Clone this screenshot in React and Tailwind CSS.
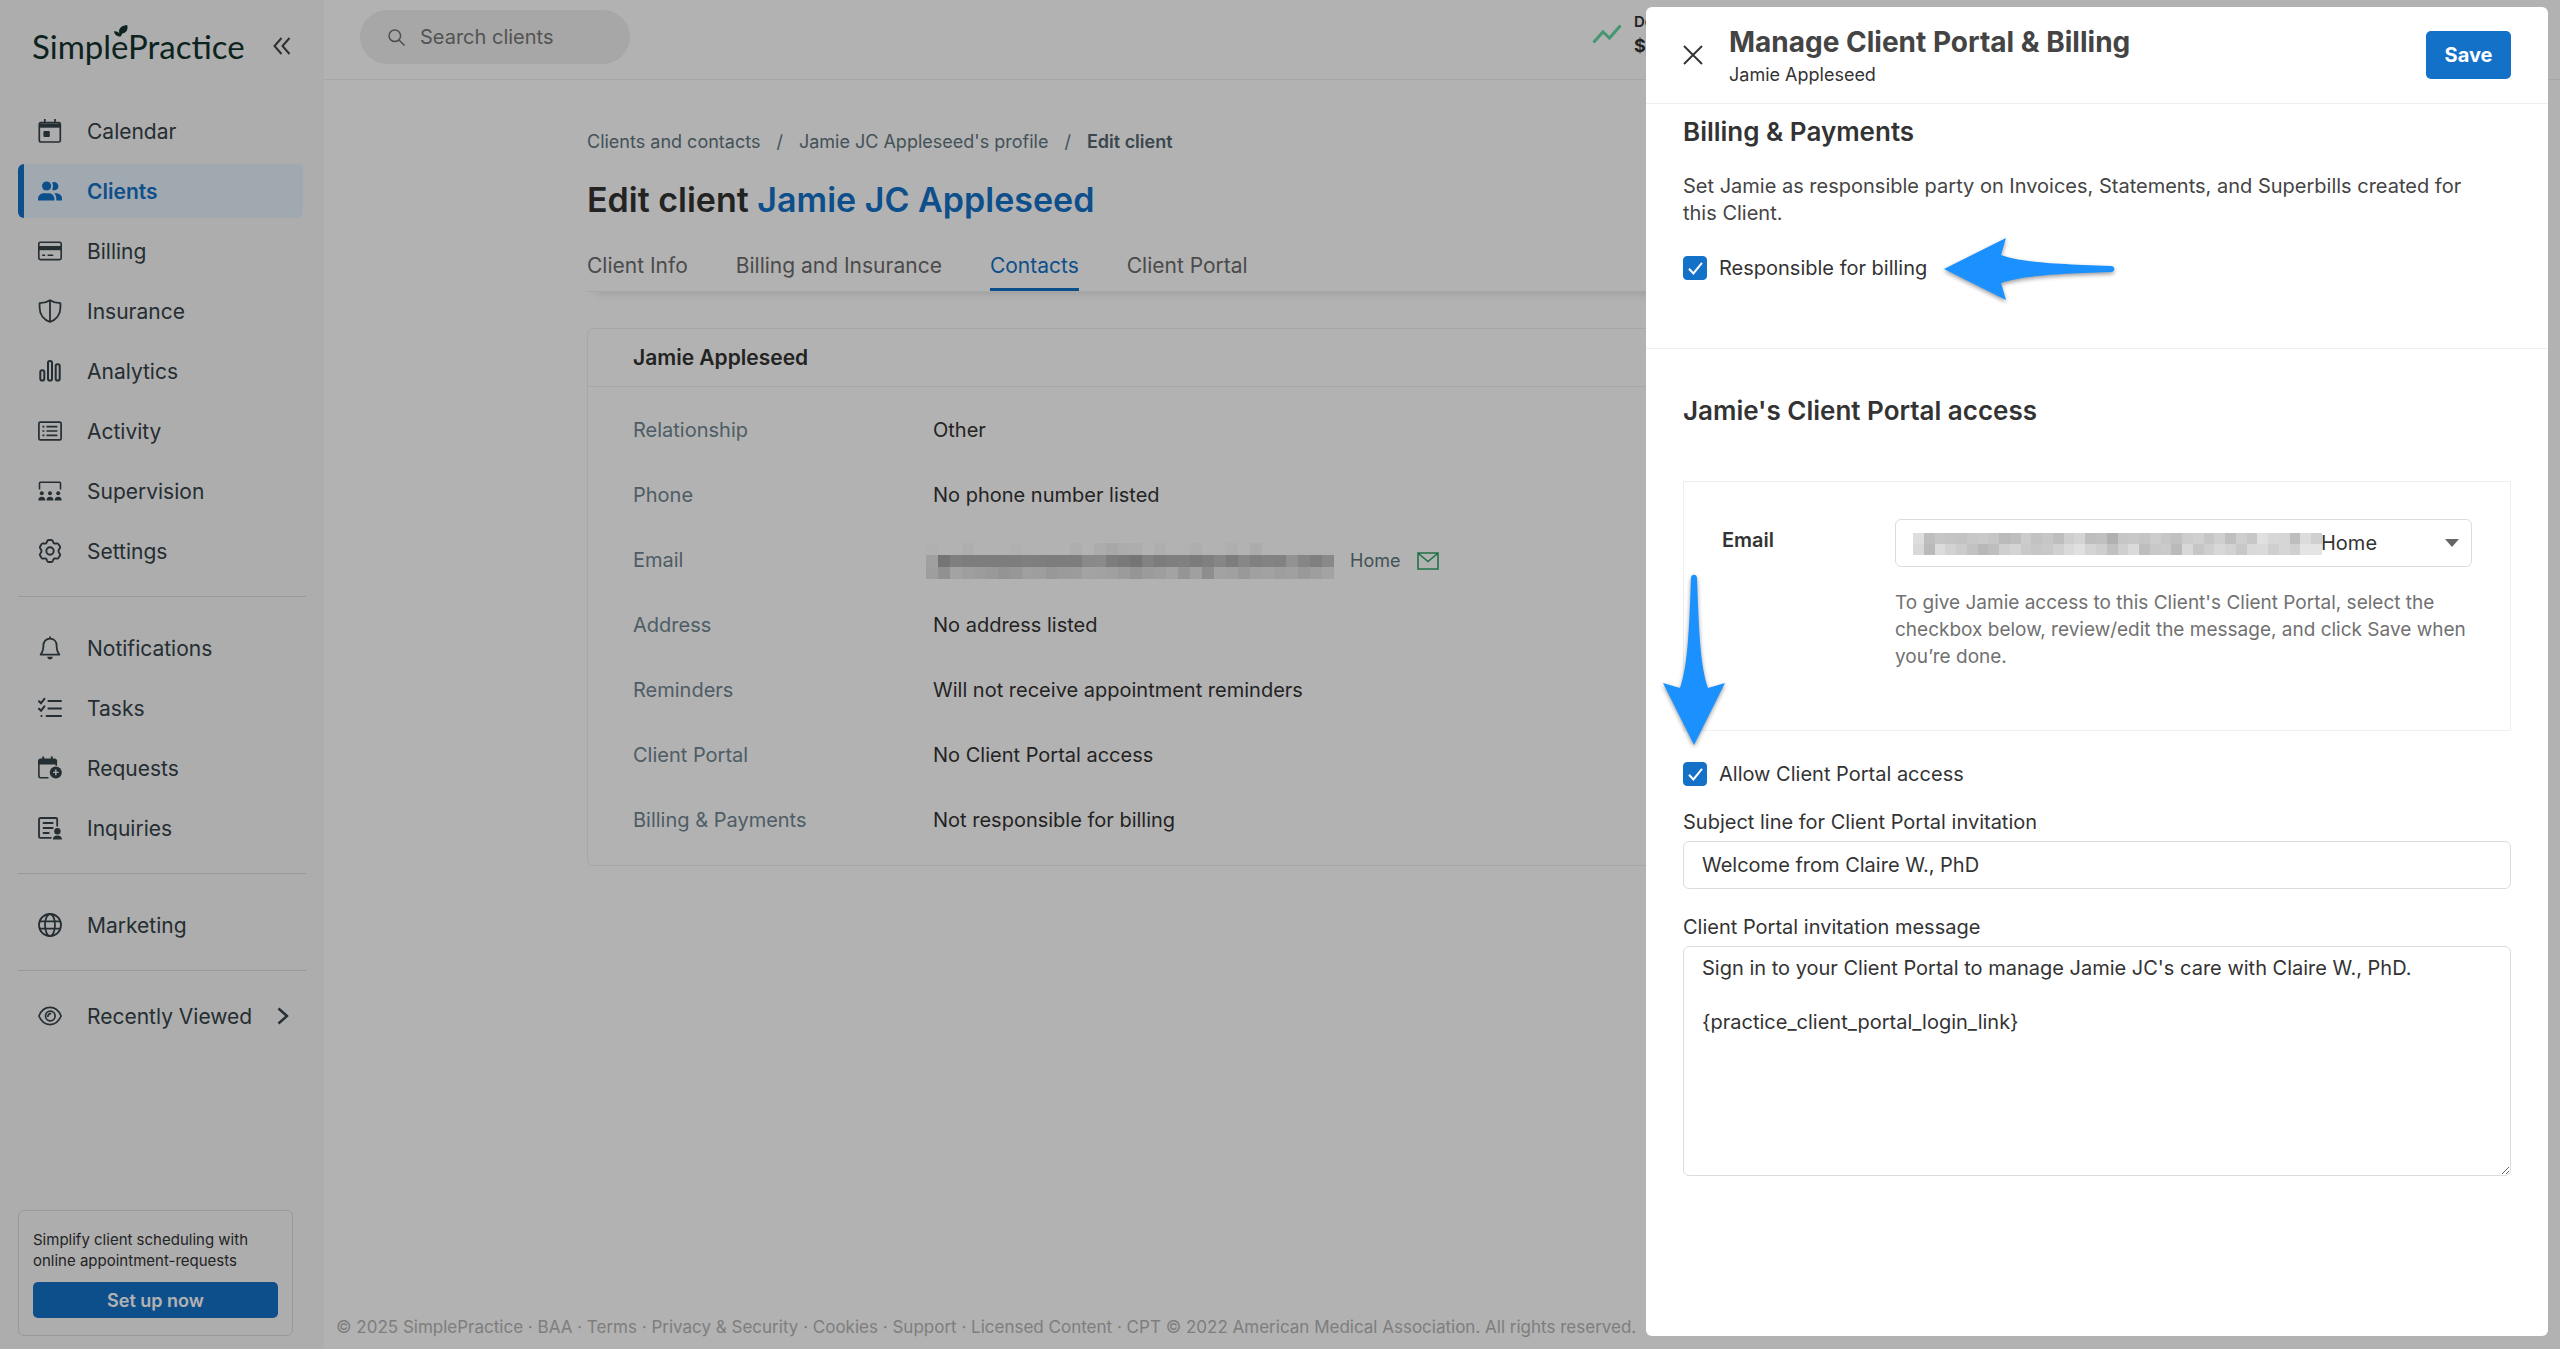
import React, { useState } from 'react';

const CalendarIcon = () => (
  <svg viewBox="0 0 24 24" className="w-6 h-6" fill="none" stroke="currentColor" strokeWidth="1.7">
    <rect x="1.3" y="3.6" width="21" height="19.4" rx="1.6" />
    <path d="M1.3 4.5h21v4.2h-21z" fill="currentColor" stroke="none" />
    <path d="M6.8 0v4M17 0v4" />
    <rect x="5.4" y="12" width="6.4" height="6" rx="1" fill="currentColor" stroke="none" />
  </svg>
);

const ClientsIcon = () => (
  <svg viewBox="0 0 24 24" className="w-6 h-6" fill="currentColor">
    <circle cx="8.6" cy="7" r="4.6" />
    <path d="M0 21.4v-1.6c0-3.6 3-5.6 6.4-5.6h3.8c3.4 0 6.2 2 6.2 5.6v1.6z" />
    <path d="M14 3.6c2.8-1.6 6.4.3 6.4 3.6 0 3.2-3.5 5-6.3 3.5 1.2-2.2 1.2-5-.1-7.1zM16.2 14.3h1.6c3.6 0 6.2 2.2 6.2 5.5v1.6h-5.7v-1.6c0-2.3-.7-4.1-2.1-5.5z" />
  </svg>
);

const BillingIcon = () => (
  <svg viewBox="0 0 24 24" className="w-6 h-6" fill="none" stroke="currentColor" strokeWidth="1.6">
    <rect x=".8" y="3.2" width="22.4" height="17.4" rx="1.6" />
    <path d="M1 7h22v4.2H1z" fill="currentColor" stroke="none" />
    <path d="M4.2 16.2h3M9.6 16.2h5.6" />
  </svg>
);

const ShieldIcon = () => (
  <svg viewBox="0 0 24 24" className="w-6 h-6" fill="none" stroke="currentColor" strokeWidth="1.8" strokeLinejoin="round">
    <path d="M12 1.2c3 2 6.6 2.8 10.4 3v4.6C22.4 15.6 18 20.8 12 23 6 20.8 1.6 15.6 1.6 8.8V4.2c3.8-.2 7.4-1 10.4-3zM12 1.5V23" />
  </svg>
);

const AnalyticsIcon = () => (
  <svg viewBox="0 0 24 24" className="w-6 h-6" fill="none" stroke="currentColor" strokeWidth="2">
    <rect x="2.3" y="11.2" width="4" height="10.4" rx="1.8" />
    <rect x="10" y="2" width="4" height="19.6" rx="1.8" />
    <rect x="17.7" y="5.2" width="4" height="16.4" rx="1.8" />
  </svg>
);

const ActivityIcon = () => (
  <svg viewBox="0 0 24 24" className="w-6 h-6" fill="none" stroke="currentColor" strokeWidth="1.7">
    <rect x=".9" y="3.2" width="22.2" height="17.6" rx="1.4" />
    <path d="M4.4 7.6h2M4.4 12h2M4.4 16.4h2M8.4 7.6h11M8.4 12h11M8.4 16.4h11" />
  </svg>
);

const SupervisionIcon = () => (
  <svg viewBox="0 0 24 24" className="w-6 h-6" fill="currentColor">
    <path d="M1.5 10.5V4.2c0-.6.4-1 1-1h19c.6 0 1 .4 1 1v6.3" fill="none" stroke="currentColor" strokeWidth="1.6" />
    <circle cx="3.8" cy="14.3" r="2" />
    <circle cx="12" cy="14.3" r="2" />
    <circle cx="20.2" cy="14.3" r="2" />
    <path d="M.3 21.6c0-2.6 1.2-3.8 3.5-3.8s3.5 1.2 3.5 3.8zM8.5 21.6c0-2.6 1.2-3.8 3.5-3.8s3.5 1.2 3.5 3.8zM16.7 21.6c0-2.6 1.2-3.8 3.5-3.8s3.5 1.2 3.5 3.8z" />
  </svg>
);

const SettingsIcon = () => (
  <svg viewBox="0 0 24 24" className="w-6 h-6" fill="none" stroke="currentColor" strokeWidth="1.9" strokeLinejoin="round">
    <path d="M9 2.600C9.300 1.500 10 1 11 1h2c1 0 1.700.5 2 1.600.4 1.700 1.600 2.400 3.200 1.900 1.100-.3 2 0 2.500.9l1.200 2c.5.9.3 1.800-.5 2.500-1.200 1.200-1.200 3 0 4.200.8.7 1 1.600.5 2.500l-1.200 2c-.5.9-1.400 1.200-2.500.9-1.600-.5-2.800.2-3.200 1.900-.3 1.100-1 1.600-2 1.600h-2c-1 0-1.700-.5-2-1.600-.4-1.700-1.600-2.400-3.200-1.900-1.100.3-2 0-2.500-.9l-1.200-2c-.5-.9-.3-1.800.5-2.500 1.200-1.200 1.200-3 0-4.200-.8-.7-1-1.600-.5-2.500l1.200-2c.5-.9 1.400-1.200 2.500-.9C7.400 5 8.600 4.300 9 2.600z" />
    <circle cx="12" cy="12" r="3.700" />
  </svg>
);

const BellIcon = () => (
  <svg viewBox="0 0 24 24" className="w-6 h-6" fill="none" stroke="currentColor" strokeWidth="1.8" strokeLinejoin="round">
    <path d="M2.6 18.6c2-2.2 2.8-4.6 2.8-9 0-4 2.6-7 6.6-7s6.6 3 6.6 7c0 4.4.8 6.800 2.800 9zM12 .4v2" />
    <path d="M9.2 20.8h5.6c-.3 1.7-1.4 2.7-2.8 2.7s-2.5-1-2.800-2.700z" fill="currentColor" stroke="none" />
  </svg>
);

const TasksIcon = () => (
  <svg viewBox="0 0 24 24" className="w-6 h-6" fill="none" stroke="currentColor" strokeWidth="2" strokeLinecap="round">
    <path d="M1 5.2l2 2 3.4-4.4M1 12.8l2 2 3.4-4.4M10.4 4.9H23M10.4 12.4H23M8.6 19.9H23M3.4 19.9h.1" />
  </svg>
);

const RequestsIcon = () => (
  <svg viewBox="0 0 24 24" className="w-6 h-6" fill="none" stroke="currentColor" strokeWidth="1.6">
    <path d="M10.5 21.8H2.6c-1 0-1.7-.7-1.7-1.7V4.8h17.4v5" />
    <path d="M.2 8.4V4.8c0-1.2 1-2.2 2.2-2.2h14.4c1.2 0 2.2 1 2.2 2.2v3.6z" fill="currentColor" stroke="none" />
    <path d="M5.2.4v3M13.8.4v3" strokeWidth="2" />
    <circle cx="17.8" cy="16.4" r="6" fill="currentColor" stroke="none" />
    <path d="M17.8 13.6v5.6M15 16.4h5.6" stroke="#f8f8f8" strokeWidth="1.4" />
  </svg>
);

const InquiriesIcon = () => (
  <svg viewBox="0 0 24 24" className="w-6 h-6" fill="none" stroke="currentColor" strokeWidth="1.8">
    <path d="M13.5 21.8H2.4c-.8 0-1.4-.6-1.4-1.4V3.4C1 2.6 1.6 2 2.4 2h15.4c.8 0 1.4.6 1.4 1.4v7" />
    <path d="M4.8 7h10.6M4.8 12h10.6M4.8 17h6.6" />
    <circle cx="19.4" cy="15.2" r="3.2" fill="currentColor" stroke="none" />
    <path d="M14.8 23.6c.2-2.7 1.8-4 4.6-4s4.4 1.3 4.6 4z" fill="currentColor" stroke="none" />
  </svg>
);

const GlobeIcon = () => (
  <svg viewBox="0 0 24 24" className="w-6 h-6" fill="none" stroke="currentColor" strokeWidth="1.8">
    <circle cx="12" cy="12" r="11" />
    <ellipse cx="12" cy="12" rx="5" ry="11" />
    <path d="M1.8 8.4h20.4M1.8 15.6h20.4" />
  </svg>
);

const EyeIcon = () => (
  <svg viewBox="0 0 24 24" className="w-6 h-6" fill="none" stroke="currentColor" strokeWidth="1.7">
    <path d="M.9 12C3.2 6.6 7 3.4 12 3.4S20.8 6.6 23.1 12C20.8 17.4 17 20.6 12 20.6S3.2 17.4.9 12z" />
    <circle cx="12.3" cy="12" r="4.8" />
    <path d="M9.8 13c0-2.4 1.2-3.6 3.4-3.4" />
  </svg>
);

const Logo = () => (
  <a href="#home" className="relative font-['Lato'] text-[33px] leading-[42px] text-[#12332f]">
    SimplePractice
    <svg viewBox="0 0 14 12" className="absolute left-[82px] top-0 w-[14px] h-[12px]" fill="currentColor">
      <path d="M6.5 11.5C3 11.5.5 9.5 0 6.2c2.4-.2 4.3.6 5.4 2.2C4 4 7 .4 13.2 0c1.2 4.6-1 8-5 8.4-.4 1.2-.9 2.2-1.7 3.1z" />
    </svg>
  </a>
);

const NAV_GROUPS = [
  [
    { label: 'Calendar', icon: CalendarIcon },
    { label: 'Clients', icon: ClientsIcon },
    { label: 'Billing', icon: BillingIcon },
    { label: 'Insurance', icon: ShieldIcon },
    { label: 'Analytics', icon: AnalyticsIcon },
    { label: 'Activity', icon: ActivityIcon },
    { label: 'Supervision', icon: SupervisionIcon },
    { label: 'Settings', icon: SettingsIcon }
  ],
  [
    { label: 'Notifications', icon: BellIcon },
    { label: 'Tasks', icon: TasksIcon },
    { label: 'Requests', icon: RequestsIcon },
    { label: 'Inquiries', icon: InquiriesIcon }
  ],
  [{ label: 'Marketing', icon: GlobeIcon }]
];

const DETAILS = [
  { label: 'Relationship', value: 'Other' },
  { label: 'Phone', value: 'No phone number listed' },
  { label: 'Email', redacted: true },
  { label: 'Address', value: 'No address listed' },
  { label: 'Reminders', value: 'Will not receive appointment reminders' },
  { label: 'Client Portal', value: 'No Client Portal access' },
  { label: 'Billing & Payments', value: 'Not responsible for billing' }
];

const TABS = ['Client Info', 'Billing and Insurance', 'Contacts', 'Client Portal'];

const FOOTER_LINKS = ['BAA', 'Terms', 'Privacy & Security', 'Cookies', 'Support', 'Licensed Content'];

// grey levels of the redaction blocks, one array per row
const PROFILE_BLOCKS = [
  [252, 255, 255, 250, 255, 255, 255, 252, 255, 255, 255, 255, 250, 255, 246, 241, 246, 248, 255, 250, 255, 254, 250, 255, 254, 250, 255, 246, 255, 255, 255, 254, 255, 254],
  [230, 168, 182, 180, 180, 179, 180, 180, 182, 181, 180, 180, 180, 196, 198, 180, 174, 168, 186, 178, 182, 184, 176, 182, 192, 180, 194, 184, 188, 186, 210, 192, 182, 196],
  [226, 208, 234, 228, 224, 220, 212, 216, 228, 226, 218, 222, 224, 234, 232, 230, 222, 214, 222, 226, 234, 214, 230, 204, 232, 230, 220, 230, 232, 226, 230, 220, 226, 234]
];

const SELECT_BLOCKS = [
  [222, 190, 198, 196, 195, 200, 202, 198, 186, 190, 204, 194, 198, 190, 206, 212, 190, 192, 176, 198, 200, 197, 204, 198, 192, 204, 208, 198, 207, 191, 206, 199, 224, 215, 213, 190, 220, 208],
  [216, 186, 220, 210, 204, 194, 184, 190, 207, 212, 202, 198, 200, 208, 218, 224, 212, 206, 192, 207, 218, 190, 200, 202, 186, 216, 198, 207, 216, 210, 200, 217, 218, 207, 214, 208, 228, 228]
];

const Redaction = ({ rows, cell, className }) => (
  <svg
    viewBox={`0 0 ${rows[0].length * cell} ${rows.length * cell}`}
    preserveAspectRatio="none"
    shapeRendering="crispEdges"
    className={className}
    aria-hidden="true"
  >
    {rows.map((row, y) =>
      row.map((level, x) => (
        <rect
          key={`${x}-${y}`}
          x={x * cell}
          y={y * cell}
          width={cell}
          height={cell}
          fill={`rgb(${level} ${level} ${level})`}
        />
      ))
    )}
  </svg>
);

const Sidebar = () => (
  <aside className="w-[324px] shrink-0 bg-[#f8f8f8] flex flex-col text-[#354249] text-[21px] leading-[27px]">
    <div className="h-[104px] pt-[25px] pl-8 pr-[33px] flex items-start justify-between">
      <Logo />
      <button type="button" aria-label="Collapse menu" className="mt-3">
        <svg viewBox="0 0 18 18" className="w-[18px] h-[18px]" fill="none" stroke="#444" strokeWidth="2">
          <path d="M8.5 1L1.5 9l7 8M16.5 1l-7 8 7 8" />
        </svg>
      </button>
    </div>

    <nav className="px-[18px]">
      {NAV_GROUPS.map((group, index) => (
        <div key={index}>
          <div className="flex flex-col gap-[6px] pr-[3px]">
            {group.map((item) => {
              const Icon = item.icon;
              const active = item.label === 'Clients';
              return (
                <a
                  key={item.label}
                  href={`#${item.label.toLowerCase()}`}
                  className={`h-[54px] flex items-center gap-[25px] pl-[14px] rounded-md border-l-[6px] ${
                    active ? 'bg-[#e6f1fd] border-[#1471c8] text-[#1471c8] font-semibold' : 'border-transparent'
                  }`}
                >
                  <Icon />
                  {item.label}
                </a>
              );
            })}
          </div>
          <hr className={`border-[#dcdcdc] mt-[18px] ${index === 2 ? 'mb-[18px]' : 'mb-6'}`} />
        </div>
      ))}
      <button type="button" className="w-full h-[54px] flex items-center pl-5 pr-[17px]">
        <EyeIcon />
        <span className="ml-[25px]">Recently Viewed</span>
        <svg viewBox="0 0 12 18" className="ml-auto w-3 h-[18px]" fill="none" stroke="currentColor" strokeWidth="2.4">
          <path d="M1.5 1.5L10 9l-8.5 7.5" />
        </svg>
      </button>
    </nav>

    <div className="mt-auto ml-[18px] mr-[31px] mb-[13px] border border-[#dcdcdc] rounded-md pt-[18px] pb-[17px] px-[14px]">
      <p className="text-[15px] leading-[21px] text-[#333]">
        Simplify client scheduling with
        <br />
        online appointment-requests
      </p>
      <button type="button" className="mt-[11px] w-full h-9 rounded-[5px] bg-[#1471c8] text-white text-[18px] font-semibold">
        Set up now
      </button>
    </div>
  </aside>
);

const TopBar = () => (
  <header className="h-20 shrink-0 border-b border-[#efefef] pl-9 flex items-start pt-[10px]">
    <label className="w-[270px] h-[54px] rounded-full bg-[#efefef] flex items-center pl-7 gap-[15px]">
      <svg viewBox="0 0 17 17" className="w-[17px] h-[17px] shrink-0" fill="none" stroke="#707070" strokeWidth="1.5">
        <circle cx="6.8" cy="6.8" r="5.8" />
        <path d="M11 11l5.5 5.5" />
      </svg>
      <input
        type="search"
        aria-label="Search clients"
        placeholder="Search clients"
        className="w-full pr-4 bg-transparent outline-none text-[20px] placeholder:text-[#777]"
      />
    </label>
    <div className="ml-[962px] flex items-center gap-3 text-[#333]">
      <svg viewBox="0 0 30 20" className="w-[30px] h-5" fill="none" stroke="#66d6a4" strokeWidth="3">
        <path d="M1.5 18.5L11 8l6.5 6L28.5 1.5" />
      </svg>
      <div className="leading-6">
        <div className="text-[15px] font-semibold">De</div>
        <div className="text-[18px] font-bold">$7</div>
      </div>
    </div>
  </header>
);

const ClientPage = () => (
  <main className="flex-1 w-full max-w-[1710px] mx-auto pt-[48px]">
    <div className="flex items-center gap-4 text-[18px] leading-[27px] text-[#617680]">
      <a href="#clients">Clients and contacts</a>
      <span>/</span>
      <a href="#profile">Jamie JC Appleseed's profile</a>
      <span>/</span>
      <span className="font-semibold text-[#55666f]">Edit client</span>
    </div>
    <h1 className="mt-[23px] text-[34px] leading-[44px] font-semibold text-[#333]">
      Edit client <span className="text-[#1471c8]">Jamie JC Appleseed</span>
    </h1>
    <div className="mt-6 flex gap-12 border-b border-[#f0f0f0] shadow-[0_10px_10px_-9px_rgba(0,0,0,0.14)]">
      {TABS.map((tab) => (
        <button
          key={tab}
          type="button"
          className={`h-[45px] text-[21px] leading-[27px] pb-1 border-b-[3px] ${
            tab === 'Contacts' ? 'border-[#1471c8] text-[#1471c8]' : 'border-transparent text-[#6c6c6c]'
          }`}
        >
          {tab}
        </button>
      ))}
    </div>

    <section className="mt-9 border border-[#f0f0f0] rounded-md text-[20px] leading-[27px]">
      <h2 className="h-[58px] flex items-center pl-[45px] border-b border-[#f0f0f0] text-[21px] font-semibold text-[#333]">
        Jamie Appleseed
      </h2>
      <dl className="pt-[11px] pb-3 pl-[45px]">
        {DETAILS.map((row) => (
          <div key={row.label} className="h-[65px] flex items-center">
            <dt className="w-[300px] shrink-0 text-[#708691]">{row.label}</dt>
            <dd className="text-[#333]">
              {row.redacted ? (
                <span className="flex items-center -ml-[7px]">
                  <Redaction rows={PROFILE_BLOCKS} cell={12} className="w-[408px] h-9" />
                  <span className="ml-4 text-[18px] text-[#617680]">Home</span>
                  <svg viewBox="0 0 22 18" className="ml-[17px] w-[22px] h-[18px]" fill="none" stroke="#2fa267" strokeWidth="1.6">
                    <path d="M1 1h20v16H1zM1.5 1.5L11 9.5l9.5-8" />
                  </svg>
                </span>
              ) : (
                row.value
              )}
            </dd>
          </div>
        ))}
      </dl>
    </section>
  </main>
);

const Checkbox = ({ id, label, checked, onChange }) => (
  <div className="flex items-center gap-3 h-6">
    <span className="relative w-6 h-6">
      <input
        id={id}
        type="checkbox"
        checked={checked}
        onChange={onChange}
        className="block appearance-none w-6 h-6 rounded-[4px] border border-[#1471c8] checked:bg-[#1471c8]"
      />
      {checked && (
        <svg viewBox="0 0 24 24" className="absolute inset-0 w-6 h-6 pointer-events-none" fill="none" stroke="white" strokeWidth="2">
          <path d="M6 12.7l4.4 4.8L19 6.8" />
        </svg>
      )}
    </span>
    <label htmlFor={id} className="text-[#333]">{label}</label>
  </div>
);

// points left; rotated for the vertical callout
const ARROW_PATH = 'M0 31L62 0l-5 17c20 7 50 9 110 11 4.5 0 4.5 6 0 6-60 2-90 4-110 11l5 17z';

const BillingDrawer = () => {
  const [responsible, setResponsible] = useState(true);
  const [portalAccess, setPortalAccess] = useState(true);

  return (
    <div role="dialog" aria-labelledby="drawer-title" className="fixed top-[7px] right-3 bottom-[13px] w-[902px] bg-white rounded-md text-[20px] leading-[27px]">
      <header className="h-[97px] px-[37px] flex items-center border-b border-[#efefef]">
        <button type="button" aria-label="Close">
          <svg viewBox="0 0 20 20" className="w-5 h-5" fill="none" stroke="#333" strokeWidth="1.9">
            <path d="M1 1l18 18M19 1L1 19" />
          </svg>
        </button>
        <div className="ml-[26px]">
          <h1 id="drawer-title" className="text-[28px] leading-9 font-bold text-[#444]">
            Manage Client Portal &amp; Billing
          </h1>
          <p className="mt-[3px] text-[18px] leading-6 text-[#333]">Jamie Appleseed</p>
        </div>
        <button type="button" className="ml-auto w-[85px] h-12 rounded-[5px] bg-[#1471c8] text-white text-[20px] font-bold">
          Save
        </button>
      </header>

      <section className="px-[37px] pt-3 pb-[68px] border-b border-[#efefef]">
        <h2 className="text-[26px] leading-8 font-semibold text-[#333]">Billing &amp; Payments</h2>
        <p className="mt-[25px] mb-[29px] pr-8 text-[#444]">
          Set Jamie as responsible party on Invoices, Statements, and Superbills created for this Client.
        </p>
        <div className="relative">
          <Checkbox
            id="responsible"
            label="Responsible for billing"
            checked={responsible}
            onChange={(e) => setResponsible(e.target.checked)}
          />
          <svg viewBox="0 0 172 62" className="absolute left-[261px] -top-[18px] w-[172px] h-[62px] overflow-visible drop-shadow-[0_2px_2px_rgba(0,0,0,0.4)]" fill="#1b90ff">
            <path d={ARROW_PATH} />
          </svg>
        </div>
      </section>

      <section className="px-[37px] pt-[46px]">
        <h2 className="text-[26px] leading-8 font-semibold text-[#333]">Jamie's Client Portal access</h2>

        <div className="relative mt-[54px] border border-[#efefef] px-[38px] pt-[37px] pb-[60px] flex">
          <label htmlFor="email" className="w-[173px] shrink-0 pt-2 font-semibold text-[#333]">Email</label>
          <div className="flex-1">
            <div className="relative">
              <select id="email" className="block appearance-none w-full h-12 pl-[425px] border border-[#dcdcdc] rounded-md bg-white text-[20px] text-[#333]">
                <option>Home</option>
              </select>
              <Redaction rows={SELECT_BLOCKS} cell={11} className="absolute left-[18px] top-[14px] w-[409px] h-[22px]" />
              <svg viewBox="0 0 14 8" className="absolute right-[13px] top-5 w-[14px] h-2 pointer-events-none" fill="#666">
                <path d="M0 0h14L7 8z" />
              </svg>
            </div>
            <p className="mt-[22px] text-[19px] text-[#717171]">
              To give Jamie access to this Client's Client Portal, select the checkbox below, review/edit the message, and click Save when you’re done.
            </p>
          </div>
          <svg viewBox="0 0 62 172" className="absolute -left-[21px] top-[91px] w-[62px] h-[172px] overflow-visible drop-shadow-[0_2px_2px_rgba(0,0,0,0.4)]" fill="#1b90ff">
            <path d={ARROW_PATH} transform="translate(0 172) rotate(-90)" />
          </svg>
        </div>

        <div className="mt-[31px] mb-[23px]">
          <Checkbox
            id="portal-access"
            label="Allow Client Portal access"
            checked={portalAccess}
            onChange={(e) => setPortalAccess(e.target.checked)}
          />
        </div>

        <label htmlFor="subject" className="block text-[#333]">Subject line for Client Portal invitation</label>
        <input
          id="subject"
          type="text"
          defaultValue="Welcome from Claire W., PhD"
          className="block mt-[5px] w-full h-12 px-[18px] border border-[#dcdcdc] rounded-md text-[#333] outline-none"
        />

        <label htmlFor="message" className="block mt-[25px] text-[#333]">Client Portal invitation message</label>
        <textarea
          id="message"
          defaultValue={"Sign in to your Client Portal to manage Jamie JC's care with Claire W., PhD.\n\n{practice_client_portal_login_link}"}
          className="block mt-[5px] w-full h-[230px] px-[18px] py-2 border border-[#dcdcdc] rounded-md text-[#333] outline-none"
        />
      </section>
    </div>
  );
};

const App = () => (
  <div className="min-h-screen flex bg-white font-['Inter',sans-serif]">
    <Sidebar />
    <div className="flex-1 min-w-0 flex flex-col">
      <TopBar />
      <ClientPage />
      <footer className="pl-3 pb-[10px] text-[17px] leading-6 text-[#b5b5b5]">
        © 2025 SimplePractice
        {FOOTER_LINKS.map((link) => (
          <React.Fragment key={link}>
            {' · '}
            <a href={`#${link.toLowerCase().replace(/[^a-z]+/g, '-')}`}>{link}</a>
          </React.Fragment>
        ))}
        {' · '}CPT © 2022 American Medical Association. All rights reserved.
      </footer>
    </div>
    <div className="fixed inset-0 bg-black/30" />
    <BillingDrawer />
  </div>
);

export default App;
